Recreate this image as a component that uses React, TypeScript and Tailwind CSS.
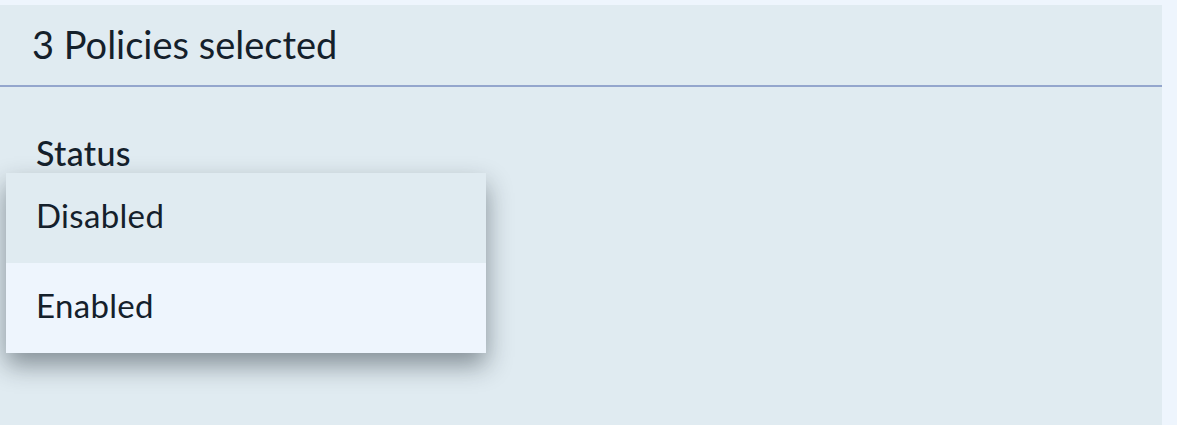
const items = ["Disabled", "Enabled"];

export default function App() {
  return (
    <div
      className="h-[425px] w-full bg-[#eef5fd] pt-[5px] pr-[15px] text-[#14202b]"
      style={{ fontFamily: "Lato, 'Noto Sans', sans-serif" }}
    >
      <div className="flex h-full flex-col bg-[#e0ebf1]">
        <div className="flex h-[82px] items-center border-b-2 border-[#94a6cd] px-8 pb-[2px]">
          <h1 className="text-[38px] font-normal leading-none">3 Policies selected</h1>
        </div>
        <div className="pt-[46px]">
          <div className="pl-[36px] text-[34px] font-medium leading-[40px] tracking-[0.01em]">Status</div>
          <ul className="ml-[6px] w-[480px] shadow-[0_12px_24px_rgba(20,30,40,0.45)]">
            {items.map((item, i) => (
              <li
                key={item}
                className={
                  "flex h-[90px] items-center px-[30px] pb-[4px] text-[33px] font-normal tracking-[0.01em] " +
                  (i === 0 ? "bg-[#e0ebf1]" : "bg-[#eef5fd]")
                }
              >
                {item}
              </li>
            ))}
          </ul>
        </div>
      </div>
    </div>
  );
}
